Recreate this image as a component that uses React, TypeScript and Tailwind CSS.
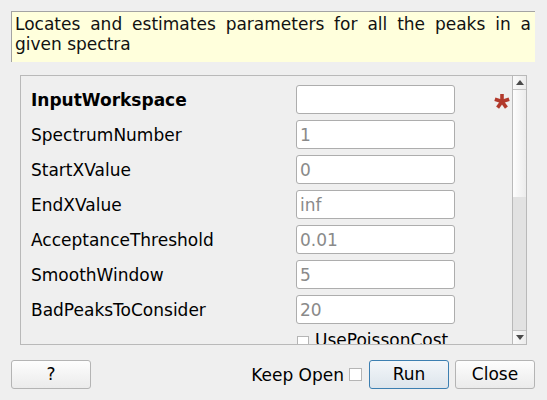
import React from 'react'

const rows = [
  { label: 'InputWorkspace', value: '', bold: true, required: true },
  { label: 'SpectrumNumber', value: '1' },
  { label: 'StartXValue', value: '0' },
  { label: 'EndXValue', value: 'inf' },
  { label: 'AcceptanceThreshold', value: '0.01' },
  { label: 'SmoothWindow', value: '5' },
  { label: 'BadPeaksToConsider', value: '20' },
]

function Asterisk() {
  // five-armed red star marking a mandatory property
  const arms = [-90, -18, 54, 126, 198]
  return (
    <svg width="18" height="18" viewBox="0 0 18 18">
      {arms.map((a) => {
        const r = (a * Math.PI) / 180
        return (
          <line
            key={a}
            x1="9"
            y1="9.5"
            x2={9 + Math.cos(r) * 7.5}
            y2={9.5 + Math.sin(r) * 7.5}
            stroke="#b23a2c"
            strokeWidth="3.6"
          />
        )
      })}
    </svg>
  )
}

function Button({ children, primary }: { children: React.ReactNode; primary?: boolean }) {
  return (
    <button
      className={
        primary
          ? 'w-[80px] h-[29px] rounded-[3px] border border-[#3c7fb1] bg-gradient-to-b from-[#f3f6f9] to-[#dde5ec] text-[17px] leading-none'
          : 'w-[80px] h-[29px] rounded-[3px] border border-[#b4b4b4] bg-gradient-to-b from-[#fdfdfd] to-[#ebebeb] text-[17px] leading-none'
      }
    >
      {children}
    </button>
  )
}

export default function App() {
  return (
    <div className="w-[547px] h-[400px] bg-[#efefef] text-black text-[17px] font-['DejaVu_Sans',sans-serif] flex flex-col overflow-hidden">
      {/* description */}
      <div className="mt-[11px] ml-[11px] w-[524px] h-[51px] bg-[#ffffdc] border-t border-l border-[#a3a3a3] pl-[3px] pr-[4px] pt-[2px] leading-[20px] text-justify text-[#111]">
        Locates and estimates parameters for all the peaks in a given spectra
      </div>

      {/* properties scroll area */}
      <div className="mt-[13px] ml-[20px] w-[507px] h-[270px] border border-[#b9b9b9] flex">
        <div className="flex-1 overflow-hidden pl-[10px] pt-[9px] flex flex-col gap-[6px]">
          {rows.map((r) => (
            <div key={r.label} className="flex items-center h-[29px] shrink-0">
              <div className={r.bold ? 'w-[265px] font-bold leading-[20px]' : 'w-[265px] leading-[20px]'}>{r.label}</div>
              <div className="w-[159px] h-[29px] bg-white border border-[#adadad] rounded-[3px] pl-[3px] flex items-center text-[#8a8a8a] leading-[20px]">
                {r.value}
              </div>
              {r.required && (
                <div className="ml-[38px] mt-[2px]">
                  <Asterisk />
                </div>
              )}
            </div>
          ))}
          <div className="flex items-start h-[29px] shrink-0 pl-[265px]">
            <div className="mt-[6px] ml-[1px] w-[12px] h-[12px] bg-white border border-[#b5b5b5]" />
            <div className="ml-[6px] leading-[20px]">UsePoissonCost</div>
          </div>
        </div>

        {/* scrollbar */}
        <div className="w-[14px] border-l border-[#b9b9b9] flex flex-col">
          <div className="h-[14px] border-b border-[#c4c4c4] bg-gradient-to-r from-[#fafafa] to-[#ececec] flex items-center justify-center">
            <svg width="8" height="5" viewBox="0 0 8 5">
              <path d="M0 5 L4 0 L8 5 Z" fill="#4a4a4a" />
            </svg>
          </div>
          <div className="h-[107px] bg-gradient-to-r from-[#fdfdfd] to-[#ececec]" />
          <div className="flex-1 bg-[#e2e2e2]" />
          <div className="h-[14px] border-t border-[#c4c4c4] bg-gradient-to-r from-[#fafafa] to-[#ececec] flex items-center justify-center">
            <svg width="8" height="5" viewBox="0 0 8 5">
              <path d="M0 0 L8 0 L4 5 Z" fill="#4a4a4a" />
            </svg>
          </div>
        </div>
      </div>

      {/* bottom buttons */}
      <div className="mt-[15px] pl-[11px] pr-[12px] flex items-center justify-between">
        <Button>?</Button>
        <div className="flex items-center">
          <span className="leading-[20px]">Keep Open</span>
          <div className="ml-[5px] w-[13px] h-[13px] bg-white border border-[#b5b5b5]" />
          <div className="ml-[7px]">
            <Button primary>Run</Button>
          </div>
          <div className="ml-[6px]">
            <Button>Close</Button>
          </div>
        </div>
      </div>
    </div>
  )
}
